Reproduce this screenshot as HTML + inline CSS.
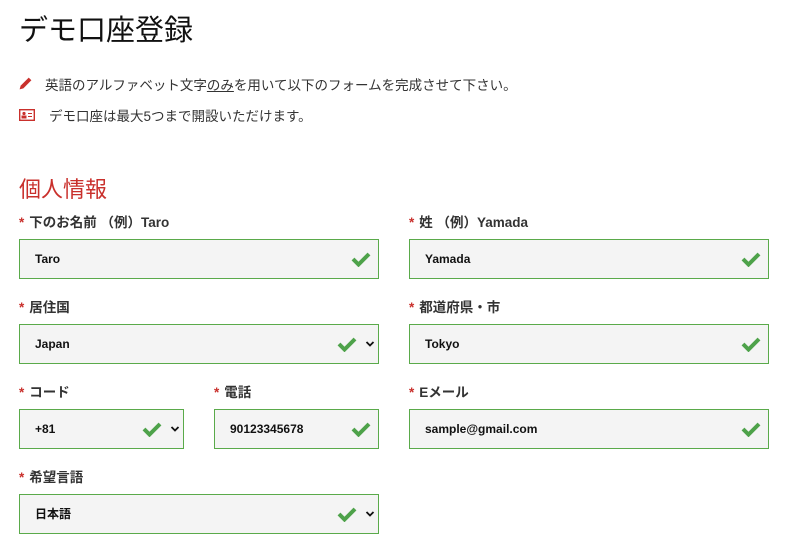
<!DOCTYPE html>
<html><head><meta charset="utf-8"><style>
body{margin:0;width:787px;height:550px;background:#fff;font-family:"Liberation Sans","Noto Sans CJK JP",sans-serif;color:#222;position:relative;overflow:hidden}
.a{position:absolute;white-space:nowrap}
h1{position:absolute;left:19px;top:7px;margin:0;font-weight:400;font-size:29px;color:#111}
.lb{position:absolute;font-size:13.5px;font-weight:bold;color:#333}
.lb span{color:#c9302c;margin-right:5px}
.in{position:absolute;border:1.5px solid #5aaa4a;background:#f4f4f4;box-sizing:border-box;height:40px;font-size:12px;font-weight:bold;color:#111;line-height:39px;padding-left:15px}
.ck{position:absolute;top:11px}
.dd{position:absolute;top:15px}
</style></head><body>
<h1>デモ口座登録</h1>
<svg class="a" style="left:18px;top:76px" width="15" height="15" viewBox="0 0 14 14"><path d="M1.5 12.5 L2.5 9 L10 1.5 L12.5 4 L5 11.5 Z" fill="#c9302c"/></svg>
<div class="a" style="left:45px;top:74px;font-size:13.5px;color:#333">英語のアルファベット文字<u>のみ</u>を用いて以下のフォームを完成させて下さい。</div>
<svg class="a" style="left:19px;top:109px" width="16" height="12" viewBox="0 0 16 12"><rect x="0.7" y="0.7" width="14.6" height="10.6" fill="none" stroke="#c9302c" stroke-width="1.4"/><circle cx="5" cy="4.5" r="1.6" fill="#c9302c"/><rect x="2.5" y="6.5" width="5" height="3" fill="#c9302c"/><rect x="9" y="4" width="4" height="1" fill="#c9302c"/><rect x="9" y="7" width="4" height="1" fill="#c9302c"/></svg>
<div class="a" style="left:49px;top:105px;font-size:13.5px;color:#333">デモ口座は最大5つまで開設いただけます。</div>
<div class="a" style="left:19px;top:172px;font-size:22px;color:#c9302c">個人情報</div>

<div class="lb" style="left:19px;top:211px"><span>*</span>下のお名前 （例）Taro</div>
<div class="in" style="left:19px;top:239px;width:360px">Taro<svg class="ck" style="left:331px" width="20" height="16" viewBox="0 0 20 16"><path d="M2 8 L7.5 13.5 L18 3" fill="none" stroke="#4ea24a" stroke-width="4"/></svg></div>
<div class="lb" style="left:409px;top:211px"><span>*</span>姓 （例）Yamada</div>
<div class="in" style="left:409px;top:239px;width:360px">Yamada<svg class="ck" style="left:331px" width="20" height="16" viewBox="0 0 20 16"><path d="M2 8 L7.5 13.5 L18 3" fill="none" stroke="#4ea24a" stroke-width="4"/></svg></div>

<div class="lb" style="left:19px;top:296px"><span>*</span>居住国</div>
<div class="in" style="left:19px;top:324px;width:360px">Japan<svg class="ck" style="left:317px" width="20" height="16" viewBox="0 0 20 16"><path d="M2 8 L7.5 13.5 L18 3" fill="none" stroke="#4ea24a" stroke-width="4"/></svg><svg class="dd" style="left:345px" width="10" height="8" viewBox="0 0 10 8"><path d="M1.5 2 L5 5.5 L8.5 2" fill="none" stroke="#111" stroke-width="1.8"/></svg></div>
<div class="lb" style="left:409px;top:296px"><span>*</span>都道府県・市</div>
<div class="in" style="left:409px;top:324px;width:360px">Tokyo<svg class="ck" style="left:331px" width="20" height="16" viewBox="0 0 20 16"><path d="M2 8 L7.5 13.5 L18 3" fill="none" stroke="#4ea24a" stroke-width="4"/></svg></div>

<div class="lb" style="left:19px;top:381px"><span>*</span>コード</div>
<div class="in" style="left:19px;top:409px;width:165px">+81<svg class="ck" style="left:122px" width="20" height="16" viewBox="0 0 20 16"><path d="M2 8 L7.5 13.5 L18 3" fill="none" stroke="#4ea24a" stroke-width="4"/></svg><svg class="dd" style="left:150px" width="10" height="8" viewBox="0 0 10 8"><path d="M1.5 2 L5 5.5 L8.5 2" fill="none" stroke="#111" stroke-width="1.8"/></svg></div>
<div class="lb" style="left:214px;top:381px"><span>*</span>電話</div>
<div class="in" style="left:214px;top:409px;width:165px">90123345678<svg class="ck" style="left:136px" width="20" height="16" viewBox="0 0 20 16"><path d="M2 8 L7.5 13.5 L18 3" fill="none" stroke="#4ea24a" stroke-width="4"/></svg></div>
<div class="lb" style="left:409px;top:381px"><span>*</span>Eメール</div>
<div class="in" style="left:409px;top:409px;width:360px">sample@gmail.com<svg class="ck" style="left:331px" width="20" height="16" viewBox="0 0 20 16"><path d="M2 8 L7.5 13.5 L18 3" fill="none" stroke="#4ea24a" stroke-width="4"/></svg></div>

<div class="lb" style="left:19px;top:466px"><span>*</span>希望言語</div>
<div class="in" style="left:19px;top:494px;width:360px">日本語<svg class="ck" style="left:317px" width="20" height="16" viewBox="0 0 20 16"><path d="M2 8 L7.5 13.5 L18 3" fill="none" stroke="#4ea24a" stroke-width="4"/></svg><svg class="dd" style="left:345px" width="10" height="8" viewBox="0 0 10 8"><path d="M1.5 2 L5 5.5 L8.5 2" fill="none" stroke="#111" stroke-width="1.8"/></svg></div>
</body></html>
